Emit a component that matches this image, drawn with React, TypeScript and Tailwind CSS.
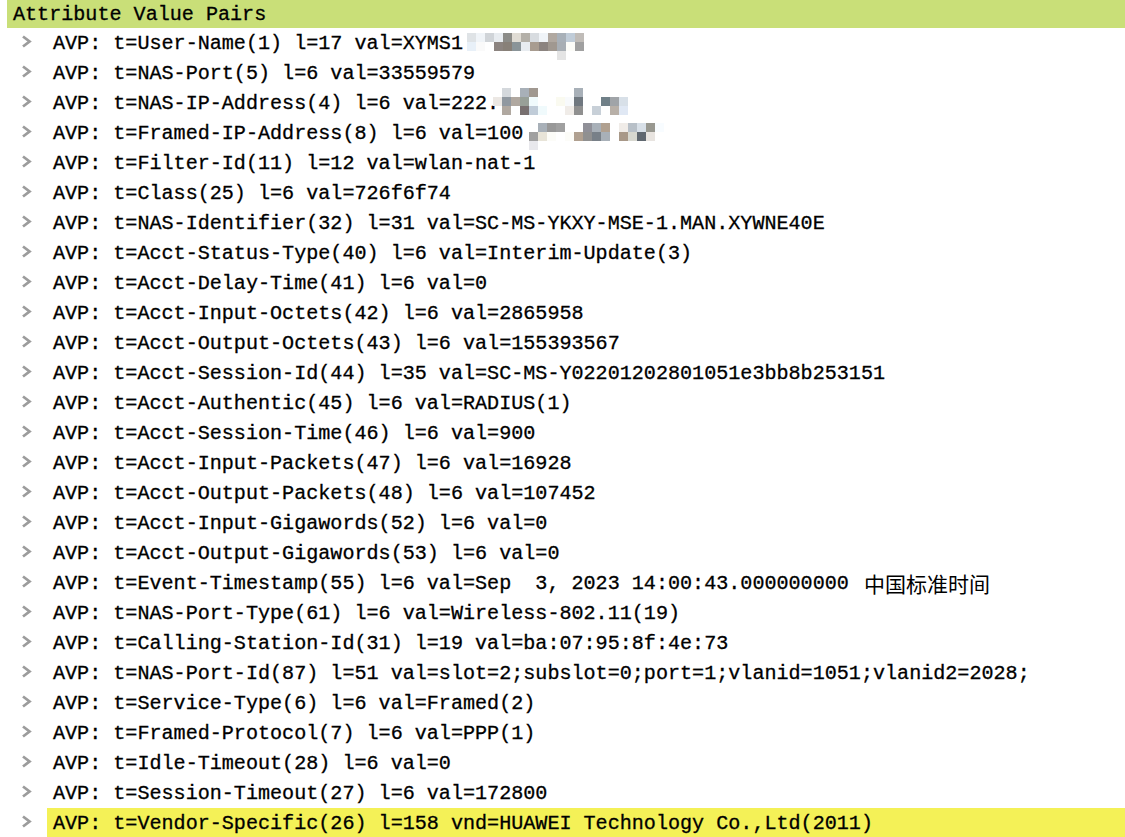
import React from "react";

type Cell = [number, number, string]; // col, row, color

function Mosaic({ x, y, cells }: { x: number; y: number; cells: Cell[] }) {
  const maxC = Math.max(...cells.map((c) => c[0])) + 1;
  const maxR = Math.max(...cells.map((c) => c[1])) + 1;
  return (
    <svg
      className="absolute pointer-events-none"
      style={{ left: x, top: y }}
      width={maxC * 9}
      height={maxR * 9}
    >
      {cells.map(([c, r, col], i) => (
        <rect key={i} x={c * 9} y={r * 9} width={9} height={9} fill={col} />
      ))}
    </svg>
  );
}

const m1: Cell[] = [
  [0, 0, "#dfe3e6"], [1, 0, "#f0f4f8"], [2, 0, "#d0d4d8"], [3, 0, "#e8ecf0"], [4, 0, "#8c8c88"], [5, 0, "#e0dcd4"],
  [6, 0, "#b4b0a8"], [7, 0, "#d8dce0"], [8, 0, "#f0f4f8"], [9, 0, "#b0a8a0"], [10, 0, "#a8b0b8"], [11, 0, "#c0ccd8"], [12, 0, "#c0bcb8"],
  [0, 1, "#e8f0f8"], [1, 1, "#fafafa"], [3, 1, "#8c8480"], [4, 1, "#888078"], [5, 1, "#8a9498"], [6, 1, "#e8ecf0"],
  [7, 1, "#a89c90"], [8, 1, "#8c8480"], [9, 1, "#a09890"], [10, 1, "#a8aeb4"], [11, 1, "#fcfcf8"], [12, 1, "#a0a0a0"],
  [10, 2, "#e4e4e4"],
];

const m3: Cell[] = [
  [1, 0, "#d4d8dc"], [3, 0, "#a8b0b8"], [4, 0, "#a09890"], [9, 0, "#a8b0b8"],
  [0, 1, "#ece8e4"], [1, 1, "#9098a0"], [2, 1, "#b0a8a0"], [3, 1, "#98a098"], [4, 1, "#f0fafc"], [7, 1, "#fafaf0"],
  [8, 1, "#f8fafc"], [9, 1, "#707880"], [12, 1, "#708088"], [13, 1, "#a0a4a8"], [14, 1, "#d8e0e8"],
  [1, 2, "#b0a8a0"], [3, 2, "#787070"], [4, 2, "#c0ccd8"], [5, 2, "#f0fafc"], [8, 2, "#f0ece8"], [9, 2, "#909090"],
  [11, 2, "#c8d0d8"], [13, 2, "#b8b0a8"], [14, 2, "#e0e8f4"],
];

const m4: Cell[] = [
  [1, 0, "#a8b0b8"], [2, 0, "#989898"], [3, 0, "#a0a0a0"], [6, 0, "#909098"], [7, 0, "#a8b0b8"], [8, 0, "#b0a090"],
  [10, 0, "#f0ece8"], [11, 0, "#b8c0c8"], [12, 0, "#d8e0e8"], [13, 0, "#989890"], [14, 0, "#f8fcff"],
  [0, 1, "#a0a0a0"], [1, 1, "#e8e4d8"], [2, 1, "#fcfcf8"], [4, 1, "#fcfcf8"], [5, 1, "#b0a090"], [6, 1, "#909090"],
  [7, 1, "#788088"], [8, 1, "#a8b0b8"], [10, 1, "#a89888"], [11, 1, "#d8d8d0"], [12, 1, "#606870"], [13, 1, "#e8e4e0"],
  [0, 2, "#e8e8ec"],
];

const rows: string[] = [
  "AVP: t=User-Name(1) l=17 val=XYMS1",
  "AVP: t=NAS-Port(5) l=6 val=33559579",
  "AVP: t=NAS-IP-Address(4) l=6 val=222.",
  "AVP: t=Framed-IP-Address(8) l=6 val=100",
  "AVP: t=Filter-Id(11) l=12 val=wlan-nat-1",
  "AVP: t=Class(25) l=6 val=726f6f74",
  "AVP: t=NAS-Identifier(32) l=31 val=SC-MS-YKXY-MSE-1.MAN.XYWNE40E",
  "AVP: t=Acct-Status-Type(40) l=6 val=Interim-Update(3)",
  "AVP: t=Acct-Delay-Time(41) l=6 val=0",
  "AVP: t=Acct-Input-Octets(42) l=6 val=2865958",
  "AVP: t=Acct-Output-Octets(43) l=6 val=155393567",
  "AVP: t=Acct-Session-Id(44) l=35 val=SC-MS-Y02201202801051e3bb8b253151",
  "AVP: t=Acct-Authentic(45) l=6 val=RADIUS(1)",
  "AVP: t=Acct-Session-Time(46) l=6 val=900",
  "AVP: t=Acct-Input-Packets(47) l=6 val=16928",
  "AVP: t=Acct-Output-Packets(48) l=6 val=107452",
  "AVP: t=Acct-Input-Gigawords(52) l=6 val=0",
  "AVP: t=Acct-Output-Gigawords(53) l=6 val=0",
  "AVP: t=Event-Timestamp(55) l=6 val=Sep  3, 2023 14:00:43.000000000 ",
  "AVP: t=NAS-Port-Type(61) l=6 val=Wireless-802.11(19)",
  "AVP: t=Calling-Station-Id(31) l=19 val=ba:07:95:8f:4e:73",
  "AVP: t=NAS-Port-Id(87) l=51 val=slot=2;subslot=0;port=1;vlanid=1051;vlanid2=2028;",
  "AVP: t=Service-Type(6) l=6 val=Framed(2)",
  "AVP: t=Framed-Protocol(7) l=6 val=PPP(1)",
  "AVP: t=Idle-Timeout(28) l=6 val=0",
  "AVP: t=Session-Timeout(27) l=6 val=172800",
  "AVP: t=Vendor-Specific(26) l=158 vnd=HUAWEI Technology Co.,Ltd(2011)",
];

function Chevron() {
  return (
    <svg width="11" height="13" viewBox="0 0 11 13" className="-mt-[3px]">
      <polyline points="2,1.5 8.5,6.5 2,11.5" fill="none" stroke="#9c9c9c" strokeWidth="2.8" />
    </svg>
  );
}

export default function App() {
  return (
    <div
      className="w-[1125px] h-[837px] overflow-hidden bg-white text-black text-[20.1px] leading-none [-webkit-text-stroke:0.3px_#000]"
      style={{ fontFamily: '"Liberation Mono", "DejaVu Sans Mono", monospace' }}
    >
      <div className="h-[28px] ml-[7px] bg-[#c9df78] pl-[6px] pt-[2px] flex items-center whitespace-pre">
        Attribute Value Pairs
      </div>
      {rows.map((r, i) => {
        const last = i === rows.length - 1;
        return (
          <div key={i} className="relative h-[30px] flex items-stretch">
            <div className="w-[47px] shrink-0 flex items-center pl-[21px]">
              <Chevron />
            </div>
            <div
              className={
                "flex-1 flex items-center pl-[6px] pt-[3px] whitespace-pre " + (last ? "bg-[#f4f157]" : "")
              }
            >
              {r}
              {i === 18 && (
                <span
                  style={{ fontFamily: '"Noto Sans CJK SC", sans-serif' }}
                  className="text-[21px] ml-[3px] -mt-[2px] [-webkit-text-stroke:0px]"
                >
                  中国标准时间
                </span>
              )}
            </div>
            {i === 0 && <Mosaic x={467} y={5} cells={m1} />}
            {i === 2 && <Mosaic x={493} y={0} cells={m3} />}
            {i === 3 && <Mosaic x={529} y={5} cells={m4} />}
          </div>
        );
      })}
    </div>
  );
}
